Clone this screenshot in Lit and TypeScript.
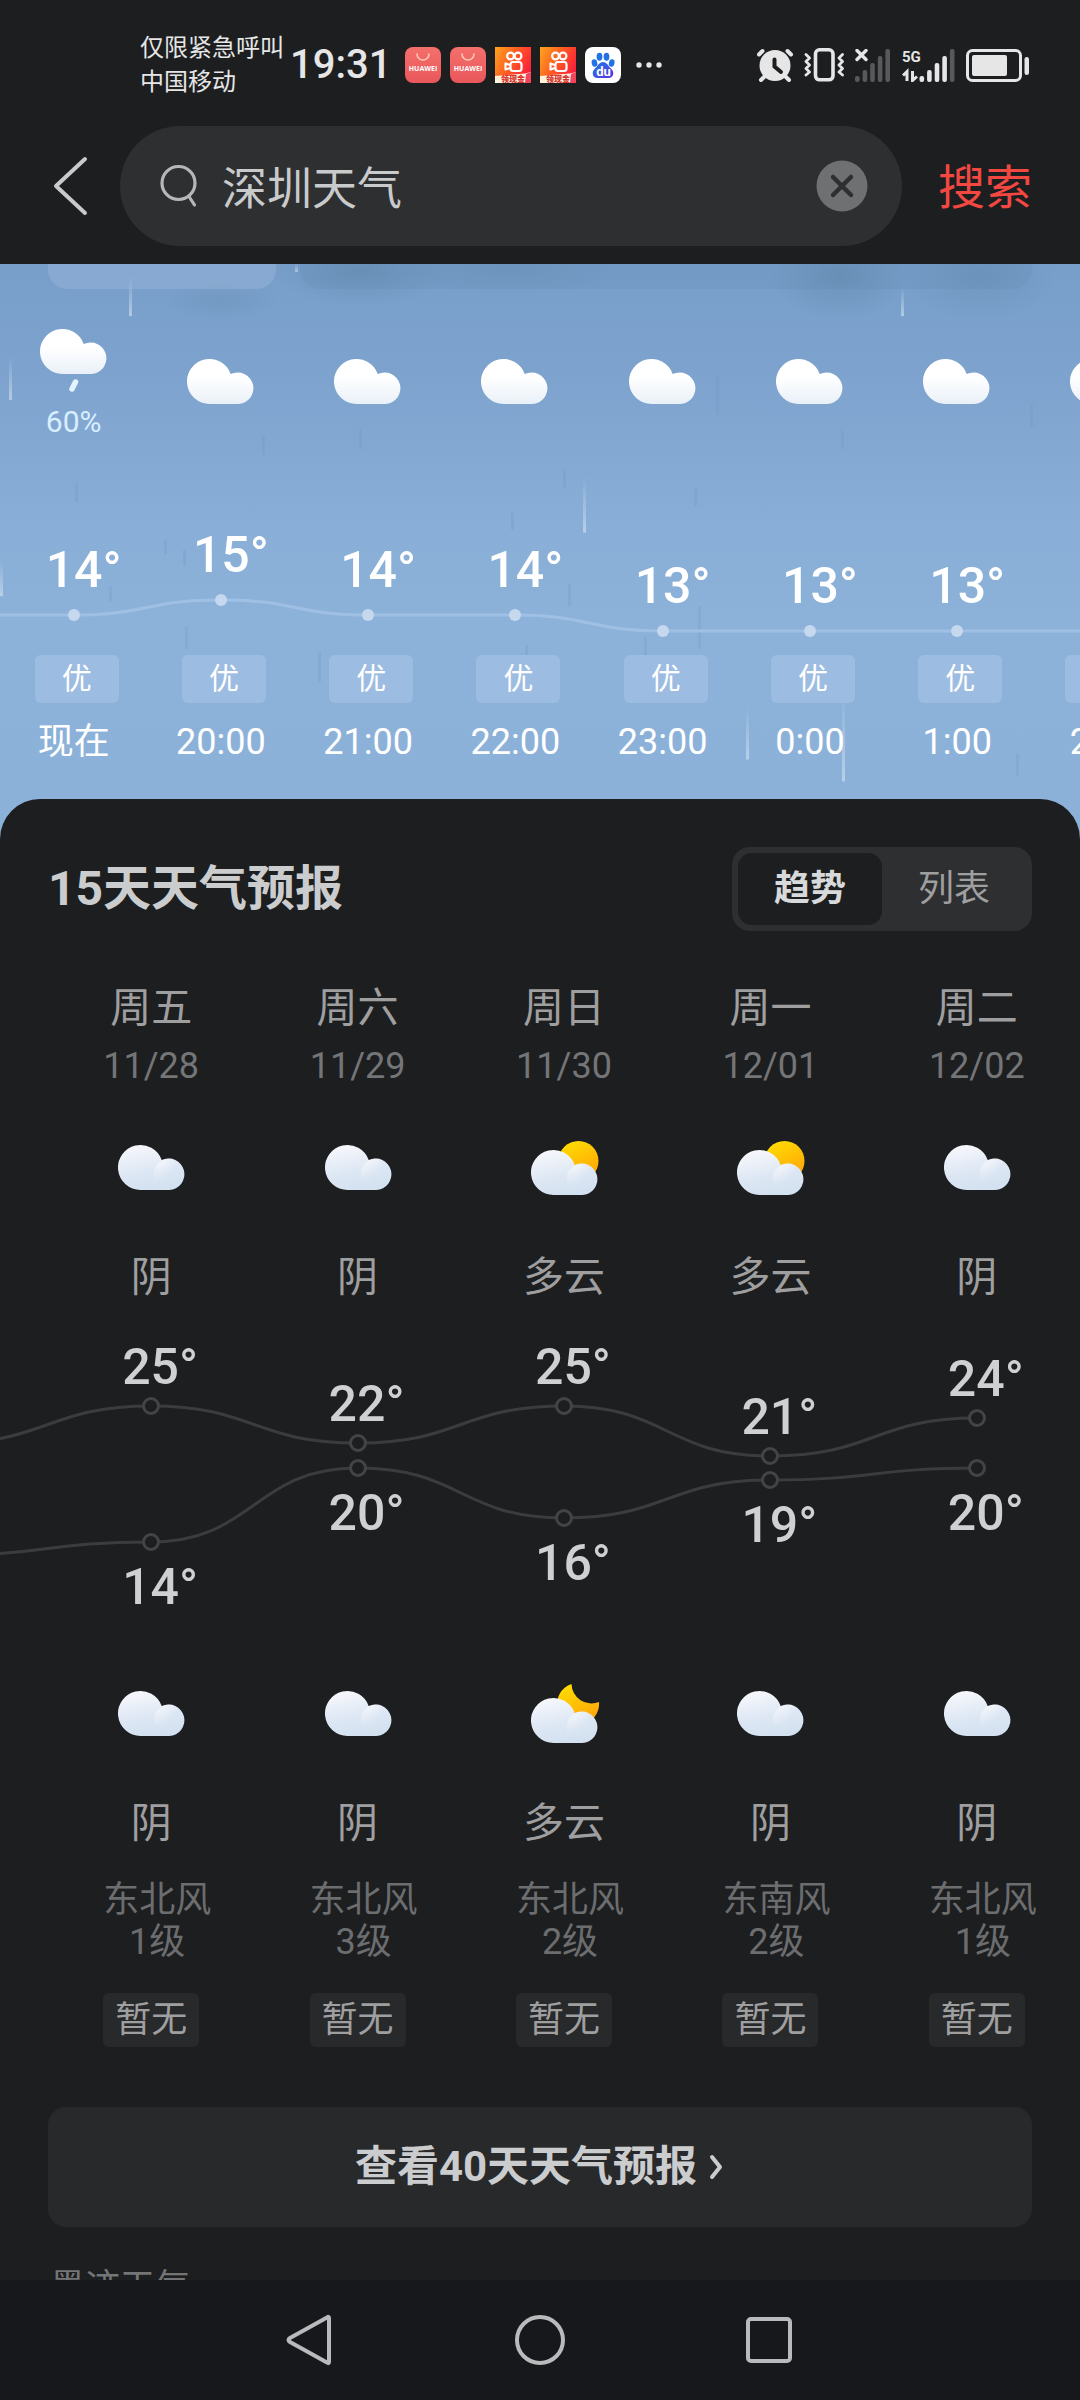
import { LitElement, html, svg, css, nothing } from "lit";
import { customElement, property, state } from "lit/decorators.js";

type IconKind = "cloud" | "rain" | "overcast" | "sunny" | "moon";

interface Hour {
  icon: IconKind;
  chance?: string;
  temp: number;
  air: string;
  time: string;
}

interface Day {
  week: string;
  date: string;
  dayIcon: IconKind;
  dayText: string;
  high: number;
  low: number;
  nightIcon: IconKind;
  nightText: string;
  wind: string;
  force: string;
  air: string;
}

const HOURS: Hour[] = [
  { icon: "rain", chance: "60%", temp: 14, air: "优", time: "现在" },
  { icon: "cloud", temp: 15, air: "优", time: "20:00" },
  { icon: "cloud", temp: 14, air: "优", time: "21:00" },
  { icon: "cloud", temp: 14, air: "优", time: "22:00" },
  { icon: "cloud", temp: 13, air: "优", time: "23:00" },
  { icon: "cloud", temp: 13, air: "优", time: "0:00" },
  { icon: "cloud", temp: 13, air: "优", time: "1:00" },
  { icon: "cloud", temp: 13, air: "优", time: "2:00" },
];
const HOUR_BEFORE = 14;

const DAYS: Day[] = [
  { week: "周五", date: "11/28", dayIcon: "overcast", dayText: "阴", high: 25, low: 14, nightIcon: "overcast", nightText: "阴", wind: "东北风", force: "1级", air: "暂无" },
  { week: "周六", date: "11/29", dayIcon: "overcast", dayText: "阴", high: 22, low: 20, nightIcon: "overcast", nightText: "阴", wind: "东北风", force: "3级", air: "暂无" },
  { week: "周日", date: "11/30", dayIcon: "sunny", dayText: "多云", high: 25, low: 16, nightIcon: "moon", nightText: "多云", wind: "东北风", force: "2级", air: "暂无" },
  { week: "周一", date: "12/01", dayIcon: "sunny", dayText: "多云", high: 21, low: 19, nightIcon: "overcast", nightText: "阴", wind: "东南风", force: "2级", air: "暂无" },
  { week: "周二", date: "12/02", dayIcon: "overcast", dayText: "阴", high: 24, low: 20, nightIcon: "overcast", nightText: "阴", wind: "东北风", force: "1级", air: "暂无" },
];
const DAY_BEFORE = { high: 22, low: 13 };

const hourY = (t: number) => Math.round(178 + (14 - t) * 15.5);
const dayY = (t: number) => Math.round(105 + (25 - t) * 12.4);

/* Curve from the centre of the previous column to the centre of this one. */
const link = (from: number, to: number) =>
  `M-50 ${from} C0 ${from} 0 ${to} 50 ${to}`;

const FONT = css`Roboto, "Noto Sans CJK SC", sans-serif`;
const FONT_CJK = css`"Noto Sans CJK SC", sans-serif`;

const CLOUD = "M22.5 45A22.5 22.5 0 1 1 43.7 15A15.8 15.8 0 1 1 51.3 45Z";

@customElement("weather-icon")
export class WeatherIcon extends LitElement {
  @property() kind: IconKind = "cloud";

  static styles = css`
    :host {
      display: block;
    }
    svg {
      display: block;
    }
  `;

  private defs() {
    return svg`<defs>
      <linearGradient id="white" x1="0" y1="0" x2="0" y2="1">
        <stop offset="0.4" stop-color="#ffffff" />
        <stop offset="1" stop-color="#e9f0f8" />
      </linearGradient>
      <linearGradient id="grey" x1="0.2" y1="0" x2="0.5" y2="1">
        <stop offset="0" stop-color="#f8f8fc" />
        <stop offset="0.6" stop-color="#dde7f4" />
        <stop offset="1" stop-color="#d3e1f0" />
      </linearGradient>
      <linearGradient id="lobe" gradientUnits="userSpaceOnUse" x1="44" y1="20" x2="56" y2="26">
        <stop offset="0" stop-color="#ffffff" stop-opacity="0.45" />
        <stop offset="1" stop-color="#ffffff" stop-opacity="0" />
      </linearGradient>
      <linearGradient id="fade" x1="0" y1="0" x2="0" y2="1">
        <stop offset="0.2" stop-color="#fff" />
        <stop offset="0.75" stop-color="#000" />
      </linearGradient>
      <mask id="upper"><rect x="30" y="12" width="40" height="34" fill="url(#fade)" /></mask>
      <linearGradient id="gold" x1="0.2" y1="0" x2="0.7" y2="1">
        <stop offset="0" stop-color="#ffde00" />
        <stop offset="1" stop-color="#ffa20a" />
      </linearGradient>
    </defs>`;
  }

  private grey(y: number, extra: unknown = nothing) {
    return html`<svg width="72" height="64" viewBox="0 0 72 64" aria-hidden="true">
      ${this.defs()}
      <g transform="translate(3 ${y})">
        ${extra}
        <path d=${CLOUD} fill="url(#grey)" />
        <circle cx="51.3" cy="29.2" r="15.8" fill="url(#lobe)" mask="url(#upper)" />
      </g>
    </svg>`;
  }

  render() {
    switch (this.kind) {
      case "rain":
        return html`<svg width="68" height="64" viewBox="0 0 68 64" aria-hidden="true">
          ${this.defs()}
          <path d=${CLOUD} fill="url(#white)" />
          <path d="M35.5 53L32 60" stroke="#e2f4ff" stroke-width="5.5" stroke-linecap="round" />
        </svg>`;
      case "overcast":
        return this.grey(10);
      case "sunny":
        return this.grey(15, svg`<circle cx="47.5" cy="11" r="20" fill="url(#gold)" />`);
      case "moon":
        return this.grey(
          17,
          svg`<path d="M40.5 -14A20 20 0 0 0 68 4A21 21 0 1 1 40.5 -14Z" fill="url(#gold)" />`
        );
      default:
        return html`<svg width="68" height="48" viewBox="0 0 68 48" aria-hidden="true">
          ${this.defs()}
          <path d=${CLOUD} fill="url(#white)" />
        </svg>`;
    }
  }
}

@customElement("status-bar")
export class StatusBar extends LitElement {
  static styles = css`
    :host {
      display: flex;
      align-items: center;
      padding: 20px 50px 0 140px;
      height: 90px;
      color: #e6e6e6;
      font-family: ${FONT};
    }
    svg {
      display: block;
    }
    .carrier {
      font-size: 24px;
      line-height: 34px;
      white-space: nowrap;
    }
    .time {
      margin: 0 14px 0 6px;
      font-size: 40px;
      line-height: 48px;
      font-weight: 500;
    }
    .apps {
      display: flex;
      align-items: center;
      gap: 9px;
    }
    .more {
      margin-left: 6px;
    }
    .system {
      display: flex;
      align-items: center;
      gap: 11px;
      margin-left: auto;
    }
    .huawei {
      font: 700 7px "Open Sans", sans-serif;
    }
    .promo {
      font: 900 8px "Noto Sans CJK SC", sans-serif;
    }
    .du {
      font: 700 13px Roboto, sans-serif;
    }
    .net {
      font: 700 15px Roboto, sans-serif;
    }
  `;

  private huawei() {
    return html`<svg width="36" height="36" viewBox="0 0 36 36" role="img" aria-label="华为应用市场">
      <defs>
        <linearGradient id="hw" x1="0" y1="0" x2="0" y2="1">
          <stop offset="0" stop-color="#f4706c" />
          <stop offset="1" stop-color="#e9575a" />
        </linearGradient>
      </defs>
      <rect width="36" height="36" rx="8" fill="url(#hw)" />
      <path d="M12 7A6 6 0 0 0 24 7" fill="none" stroke="#ffc9b8" stroke-width="1.6" stroke-linecap="round" />
      <text class="huawei" x="18" y="24" text-anchor="middle" fill="#fff">HUAWEI</text>
    </svg>`;
  }

  private kuaishou() {
    return html`<svg width="36" height="36" viewBox="0 0 36 36" role="img" aria-label="快手极速版">
      <defs>
        <linearGradient id="ks" x1="0" y1="0.1" x2="1" y2="0.6">
          <stop offset="0" stop-color="#ffa01e" />
          <stop offset="0.5" stop-color="#ff5a22" />
          <stop offset="1" stop-color="#fb1f3c" />
        </linearGradient>
      </defs>
      <rect width="36" height="36" fill="url(#ks)" />
      <g fill="none" stroke="#fff" stroke-width="2.2">
        <circle cx="15.5" cy="9" r="3.4" />
        <circle cx="23" cy="9" r="3.4" />
        <rect x="15.5" y="15" width="11" height="9" rx="2.5" />
        <path d="M15 18L10.5 16.5V22.5L15 21" stroke-linejoin="round" />
      </g>
      <path d="M0 29L30 26.5L36 25L33 36H0Z" fill="#fff3e0" />
      <path d="M31 27L36 25V36H30Z" fill="#f3455a" />
      <text class="promo" x="18" y="35" text-anchor="middle" fill="#d5342c">领现金</text>
    </svg>`;
  }

  private bars(dim: number, offset: number) {
    return [6, 12, 19, 26, 33].map(
      (h, i) => svg`<rect x=${offset + i * 7.6} y=${33 - h} width="4.6" height=${h} rx="2"
        fill=${i >= dim ? "#58595b" : "#e6e6e6"} />`
    );
  }

  render() {
    return html`
      <div class="carrier">仅限紧急呼叫<br />中国移动</div>
      <div class="time">19:31</div>
      <div class="apps">
        ${this.huawei()} ${this.huawei()} ${this.kuaishou()} ${this.kuaishou()}
        <svg width="36" height="36" viewBox="0 0 36 36" role="img" aria-label="百度">
          <defs>
            <linearGradient id="bd" x1="0" y1="0" x2="1" y2="1">
              <stop offset="0" stop-color="#1f7de8" />
              <stop offset="1" stop-color="#5a2fe0" />
            </linearGradient>
          </defs>
          <rect width="36" height="36" rx="8" fill="#fff" />
          <g fill="#2372e6">
            <ellipse cx="9.5" cy="16" rx="2.8" ry="3.8" transform="rotate(-12 9.5 16)" />
            <ellipse cx="14.5" cy="9.8" rx="2.9" ry="4" />
            <ellipse cx="21.5" cy="9.8" rx="2.9" ry="4" />
            <ellipse cx="26.7" cy="16" rx="2.8" ry="3.8" transform="rotate(12 26.7 16)" />
          </g>
          <path d="M18 15C22 15 23 19 26 21.5C30 25 28.5 31 23.5 31H12.5C7.5 31 6 25 10 21.5C13 19 14 15 18 15Z" fill="url(#bd)" />
          <text class="du" x="18.5" y="29" text-anchor="middle" fill="#fff">du</text>
        </svg>
        <svg class="more" width="26" height="8" viewBox="0 0 26 8" aria-hidden="true" fill="#e6e6e6">
          <circle cx="3" cy="4" r="2.7" />
          <circle cx="13" cy="4" r="2.7" />
          <circle cx="23" cy="4" r="2.7" />
        </svg>
      </div>
      <div class="system">
        <svg width="36" height="34" viewBox="0 0 36 34" role="img" aria-label="闹钟">
          <circle cx="18" cy="17.5" r="15.5" fill="#e6e6e6" />
          <g fill="none" stroke-linecap="round">
            <path d="M2 6.5L5.5 3M34 6.5L30.5 3M7.5 28.5L4 32M28.5 28.5L32 32" stroke="#e6e6e6" stroke-width="4" />
            <path d="M17.5 11.5V18.5L24 24" stroke="#1d1e20" stroke-width="4" />
          </g>
        </svg>
        <svg width="40" height="34" viewBox="0 0 40 34" role="img" aria-label="振动">
          <rect x="11.5" y="1.8" width="17.5" height="30" rx="4" fill="none" stroke="#e6e6e6" stroke-width="3.6" />
          <path d="M2 6.5L5.5 10L2 13.5L5.500 17L2 20.5L5.5 24L2 27M38.5 6.5L35 10L38.5 13.5L35 17L38.5 20.5L35 24L38.5 27" fill="none" stroke="#e6e6e6" stroke-width="2.8" stroke-linejoin="round" stroke-linecap="round" />
        </svg>
        <svg width="36" height="33" viewBox="0 0 36 33" role="img" aria-label="无信号">
          ${this.bars(0, 0)}
          <path d="M2 1.5L11 10.5M11 1.5L2 10.5" stroke="#e6e6e6" stroke-width="3.4" stroke-linecap="round" />
        </svg>
        <svg width="53" height="33" viewBox="0 0 53 33" role="img" aria-label="5G 信号">
          ${this.bars(4, 17.5)}
          <text class="net" x="0" y="13" fill="#e6e6e6">5G</text>
          <path d="M5 32V22.5L1 26.5M10.5 22V31.5L15 27.5" fill="none" stroke="#e6e6e6" stroke-width="3" />
        </svg>
        <svg width="64" height="33" viewBox="0 0 64 33" role="img" aria-label="电池">
          <rect x="1.5" y="1.5" width="53" height="30" rx="5" fill="none" stroke="#e6e6e6" stroke-width="3" />
          <rect x="6" y="6" width="35" height="21" rx="2" fill="#e6e6e6" />
          <rect x="58.5" y="8" width="4.5" height="18" rx="2.2" fill="#e6e6e6" />
        </svg>
      </div>
    `;
  }
}

@customElement("search-header")
export class SearchHeader extends LitElement {
  @state() private query = "深圳天气";

  static styles = css`
    :host {
      display: block;
      font-family: ${FONT_CJK};
    }
    form {
      display: flex;
      align-items: center;
      padding: 16px 48px 18px;
    }
    button {
      padding: 0;
      border: 0;
      background: none;
      font: inherit;
      cursor: pointer;
    }
    svg {
      display: block;
    }
    .back {
      margin-right: 28px;
    }
    .box {
      display: flex;
      flex: 1;
      align-items: center;
      gap: 22px;
      min-width: 0;
      height: 120px;
      padding: 0 34px 0 40px;
      box-sizing: border-box;
      border-radius: 60px;
      background: #2e2f31;
    }
    .field {
      flex: 1;
      min-width: 0;
      padding: 0;
      border: 0;
      outline: 0;
      background: none;
      color: #c9cacb;
      font: inherit;
      font-size: 45px;
      line-height: 60px;
    }
    .submit {
      margin-left: 36px;
      padding-bottom: 4px;
      color: #f34842;
      font-size: 47px;
      line-height: 60px;
    }
  `;

  render() {
    return html`<form role="search" @submit=${(e: Event) => e.preventDefault()}>
      <button class="back" type="button" aria-label="返回">
        <svg width="44" height="64" viewBox="0 0 44 64" aria-hidden="true">
          <path d="M37 5L8 32L37 59" fill="none" stroke="#c9cacb" stroke-width="4" stroke-linecap="round" stroke-linejoin="round" />
        </svg>
      </button>
      <div class="box">
        <svg width="40" height="44" viewBox="0 0 40 44" aria-hidden="true">
          <g fill="none" stroke="#b6b7b8" stroke-width="3.2" stroke-linecap="round">
            <circle cx="18.5" cy="19" r="16.5" />
            <path d="M29 32.500L34.5 41" />
          </g>
        </svg>
        <input class="field" type="text" aria-label="搜索内容" .value=${this.query}
          @input=${(e: Event) => (this.query = (e.target as HTMLInputElement).value)} />
        <button type="button" aria-label="清空" @click=${() => (this.query = "")}>
          <svg width="52" height="52" viewBox="0 0 52 52" aria-hidden="true">
            <circle cx="26" cy="26" r="25.5" fill="#6f7072" />
            <path d="M17 17L35 35M35 17L17 35" stroke="#2e2f31" stroke-width="4.5" stroke-linecap="round" />
          </svg>
        </button>
      </div>
      <button class="submit" type="submit">搜索</button>
    </form>`;
  }
}

@customElement("hourly-forecast")
export class HourlyForecast extends LitElement {
  static styles = css`
    :host {
      display: block;
      position: relative;
      overflow: hidden;
      padding-bottom: 76px;
      background: linear-gradient(#789fca 0, #7ca2cd 18%, #83a9d3 32%, #89aed7 46%, #8db2d9 62%, #8cb1d9 100%);
      color: #fff;
      font-family: ${FONT};
    }
    .rain {
      position: absolute;
      inset: 0;
      width: 100%;
      height: 100%;
    }
    .peek {
      position: relative;
      display: flex;
      gap: 24px;
      height: 25px;
      padding: 0 48px;
      margin-bottom: 40px;
    }
    .card {
      flex: 0 0 228px;
      border-radius: 0 0 20px 20px;
      background: rgba(160, 185, 220, 0.4);
    }
    .card.dim {
      flex: 1;
      background: rgba(90, 130, 165, 0.16);
    }
    ol {
      position: relative;
      display: grid;
      grid-auto-flow: column;
      grid-auto-columns: 13.636%;
      margin: 0;
      padding: 0;
      list-style: none;
    }
    li {
      display: flex;
      flex-direction: column;
      align-items: center;
    }
    .sky {
      display: flex;
      flex-direction: column;
      align-items: center;
      justify-content: center;
      gap: 14px;
      height: 108px;
    }
    .chance {
      color: #d9eeff;
      font-size: 30px;
      line-height: 30px;
    }
    .chart {
      display: grid;
      width: 100%;
      height: 200px;
    }
    .line {
      grid-area: 1 / 1;
      width: 100%;
      height: 200px;
      overflow: visible;
    }
    .line path {
      fill: none;
      stroke: #9fc0e4;
      stroke-width: 3px;
      vector-effect: non-scaling-stroke;
    }
    .point {
      grid-area: 1 / 1;
      position: relative;
      z-index: 1;
      display: flex;
      flex-direction: column;
      align-items: center;
      gap: 9px;
    }
    .temp {
      padding-left: 20px;
      font-size: 50px;
      line-height: 60px;
      font-weight: 500;
    }
    .dot {
      width: 12px;
      height: 12px;
      border-radius: 50%;
      background: #c5d8ee;
    }
    .air {
      margin: 18px 0 18px 6px;
      width: 84px;
      border-radius: 6px;
      background: #9dbce2;
      font-size: 30px;
      line-height: 48px;
      text-align: center;
    }
    .time {
      font-size: 36px;
      line-height: 42px;
    }
  `;

  private rain() {
    const bright: number[][] = [
      [129, 11, 52], [9, 91, 135], [0, 296, 330], [295, 0, 8],
      [583, 211, 267], [746, 441, 492], [842, 426, 514], [901, 24, 52],
    ];
    const dark: number[][] = [
      [359, 164, 184], [262, 170, 190], [75, 218, 236], [511, 247, 264], [164, 274, 288],
      [109, 320, 336], [183, 284, 300], [185, 360, 382], [485, 390, 412], [525, 378, 392],
      [318, 385, 415], [563, 204, 222], [694, 222, 240], [841, 165, 184], [1030, 140, 162],
      [698, 340, 382], [644, 370, 392], [1016, 486, 508], [716, 112, 150], [568, 318, 340],
    ];
    return html`<svg class="rain" viewBox="0 0 1080 571" preserveAspectRatio="none" aria-hidden="true">
      <defs>
        <linearGradient id="streak" x1="0" y1="0" x2="0" y2="1">
          <stop offset="0" stop-color="#cfe0f1" stop-opacity="0" />
          <stop offset="1" stop-color="#cfe0f1" stop-opacity="0.65" />
        </linearGradient>
        <radialGradient id="shade">
          <stop offset="0" stop-color="#5f86a8" stop-opacity="0.5" />
          <stop offset="1" stop-color="#5f86a8" stop-opacity="0" />
        </radialGradient>
      </defs>
      <ellipse cx="360" cy="6" rx="90" ry="36" fill="url(#shade)" />
      <ellipse cx="220" cy="36" rx="60" ry="20" fill="url(#shade)" opacity="0.5" />
      <ellipse cx="510" cy="4" rx="110" ry="28" fill="url(#shade)" opacity="0.6" />
      <ellipse cx="840" cy="12" rx="70" ry="44" fill="url(#shade)" />
      <ellipse cx="980" cy="12" rx="80" ry="44" fill="url(#shade)" opacity="0.7" />
      ${dark.map(([x, a, b]) => svg`<rect x=${x} y=${a} width="3" height=${b - a} rx="1" fill="#6b93bd" opacity="0.22" />`)}
      ${bright.map(([x, a, b]) => svg`<rect x=${x} y=${a} width="3" height=${b - a} rx="1" fill="url(#streak)" />`)}
    </svg>`;
  }

  render() {
    return html`
      ${this.rain()}
      <div class="peek">
        <div class="card"></div>
        <div class="card dim"></div>
      </div>
      <ol>
        ${HOURS.map((h, i) => {
          const y = hourY(h.temp);
          const before = hourY(i ? HOURS[i - 1].temp : HOUR_BEFORE);
          return html`<li>
            <div class="sky">
              <weather-icon kind=${h.icon}></weather-icon>
              ${h.chance ? html`<span class="chance">${h.chance}</span>` : nothing}
            </div>
            <div class="chart">
              <svg class="line" viewBox="0 0 100 200" preserveAspectRatio="none" aria-hidden="true">
                <path d=${link(before, y)} />
              </svg>
              <div class="point" style="padding-top:${y - 75}px">
                <span class="temp">${h.temp}°</span>
                <span class="dot"></span>
              </div>
            </div>
            <span class="air">${h.air}</span>
            <span class="time">${h.time}</span>
          </li>`;
        })}
      </ol>
    `;
  }
}

@customElement("daily-forecast")
export class DailyForecast extends LitElement {
  @state() private view: "trend" | "list" = "trend";

  static styles = css`
    :host {
      display: block;
      position: relative;
      margin-top: -40px;
      padding-top: 48px;
      border-radius: 40px 40px 0 0;
      background: #1d1e20;
      color: #9f9fa0;
      font-family: ${FONT};
    }
    .head {
      display: flex;
      align-items: center;
      justify-content: space-between;
      padding: 0 48px;
    }
    h2 {
      margin: 0;
      color: #cbccce;
      font-size: 48px;
      line-height: 60px;
      font-weight: 700;
    }
    .switch {
      display: flex;
      padding: 6px;
      border-radius: 18px;
      background: #2e2f31;
    }
    .switch button {
      width: 144px;
      padding: 0;
      border: 0;
      border-radius: 14px;
      background: none;
      color: #9f9fa0;
      font: inherit;
      font-size: 36px;
      line-height: 72px;
      cursor: pointer;
    }
    .switch button[aria-pressed="true"] {
      background: #1d1e20;
      color: #d8d9da;
      font-weight: 700;
    }
    ol {
      display: grid;
      grid-template-columns: repeat(5, 1fr);
      margin: 53px 0 60px;
      padding: 0 0 0 48px;
      overflow: visible;
      list-style: none;
    }
    li {
      display: flex;
      flex-direction: column;
      align-items: center;
      min-width: 0;
    }
    .name {
      font-size: 41px;
      line-height: 48px;
    }
    .date {
      margin: 13px 0 48px;
      color: #747577;
      font-size: 36px;
      line-height: 42px;
    }
    .sky {
      margin-top: 54px;
    }
    .chart {
      display: grid;
      width: 100%;
      height: 380px;
    }
    .line {
      grid-area: 1 / 1;
      width: 100%;
      height: 380px;
      overflow: visible;
    }
    .line path {
      fill: none;
      stroke: #3b3c3e;
      stroke-width: 3px;
      vector-effect: non-scaling-stroke;
    }
    .points {
      grid-area: 1 / 1;
      position: relative;
      z-index: 1;
      display: flex;
      flex-direction: column;
      align-items: center;
    }
    .temp {
      padding-left: 18px;
      color: #cfd0d1;
      font-size: 50px;
      line-height: 60px;
      font-weight: 500;
    }
    .dot {
      box-sizing: border-box;
      width: 18px;
      height: 18px;
      border: 3px solid #434446;
      border-radius: 50%;
      background: #1d1e20;
    }
    .dot.lower {
      margin-bottom: 6px;
    }
    .wind {
      display: flex;
      flex-direction: column;
      margin: 32px 0 30px;
      padding-left: 12px;
      color: #6c6d6f;
      font-size: 36px;
      line-height: 42px;
      text-align: center;
    }
    .air {
      width: 96px;
      border-radius: 6px;
      background: #28292b;
      font-size: 36px;
      line-height: 54px;
      text-align: center;
    }
    .more {
      display: flex;
      align-items: center;
      justify-content: center;
      gap: 12px;
      height: 120px;
      margin: 0 48px 40px;
      border-radius: 18px;
      background: #28292b;
      color: #cbccce;
      font-size: 42px;
      line-height: 60px;
      font-weight: 700;
      text-decoration: none;
    }
    .source {
      margin: 0;
      padding: 0 50px;
      color: #747577;
      font-size: 35px;
      line-height: 42px;
    }
  `;

  private day(d: Day, i: number) {
    const before = i ? DAYS[i - 1] : DAY_BEFORE;
    const top = dayY(d.high);
    const bottom = dayY(d.low);
    return html`<li>
      <span class="name">${d.week}</span>
      <span class="date">${d.date}</span>
      <weather-icon kind=${d.dayIcon}></weather-icon>
      <span class="name sky">${d.dayText}</span>
      <div class="chart">
        <svg class="line" viewBox="0 0 100 380" preserveAspectRatio="none" aria-hidden="true">
          <path d=${link(dayY(before.high), top)} />
          <path d=${link(dayY(before.low), bottom)} />
        </svg>
        <div class="points" style="padding-top:${top - 69}px">
          <span class="temp">${d.high}°</span>
          <span class="dot"></span>
          <span class="dot lower" style="margin-top:${bottom - top - 18}px"></span>
          <span class="temp">${d.low}°</span>
        </div>
      </div>
      <weather-icon kind=${d.nightIcon}></weather-icon>
      <span class="name sky">${d.nightText}</span>
      <div class="wind"><span>${d.wind}</span><span>${d.force}</span></div>
      <span class="air">${d.air}</span>
    </li>`;
  }

  render() {
    return html`
      <div class="head">
        <h2>15天天气预报</h2>
        <div class="switch" role="group" aria-label="显示方式">
          <button type="button" aria-pressed=${this.view === "trend"} @click=${() => (this.view = "trend")}>趋势</button>
          <button type="button" aria-pressed=${this.view === "list"} @click=${() => (this.view = "list")}>列表</button>
        </div>
      </div>
      <ol>
        ${DAYS.map((d, i) => this.day(d, i))}
      </ol>
      <a class="more" href="#forty-days">
        <span>查看40天天气预报</span>
        <svg width="16" height="28" viewBox="0 0 16 28" aria-hidden="true">
          <path d="M3 4L11 14L3 24" fill="none" stroke="#cbccce" stroke-width="4" stroke-linecap="round" stroke-linejoin="round" />
        </svg>
      </a>
      <p class="source">墨迹天气</p>
    `;
  }
}

@customElement("app-root")
export class AppRoot extends LitElement {
  static styles = css`
    :host {
      display: flex;
      flex-direction: column;
      height: 100vh;
      background: #1d1e20;
      font-family: ${FONT};
    }
    main {
      flex: 1;
      min-height: 0;
      overflow: hidden;
    }
    .nav {
      display: flex;
      align-items: center;
      justify-content: center;
      gap: 158px;
      height: 120px;
      background: #17181b;
    }
    .nav button {
      padding: 0;
      border: 0;
      background: none;
      cursor: pointer;
    }
    .nav svg {
      display: block;
      fill: none;
      stroke: #b9babb;
      stroke-width: 4px;
      stroke-linejoin: round;
    }
  `;

  render() {
    return html`
      <status-bar></status-bar>
      <search-header></search-header>
      <main>
        <hourly-forecast></hourly-forecast>
        <daily-forecast></daily-forecast>
      </main>
      <nav class="nav" aria-label="系统导航">
        <button type="button" aria-label="返回">
          <svg width="72" height="72" viewBox="0 0 72 72"><path d="M55 14V58Q55 60 53 58.5L16 38Q13 36 16 34L53 13.5Q55 12 55 14Z" /></svg>
        </button>
        <button type="button" aria-label="主屏幕">
          <svg width="72" height="72" viewBox="0 0 72 72"><circle cx="36" cy="36" r="23" /></svg>
        </button>
        <button type="button" aria-label="最近任务">
          <svg width="72" height="72" viewBox="0 0 72 72"><rect x="14" y="15" width="42" height="42" rx="3" /></svg>
        </button>
      </nav>
    `;
  }
}
